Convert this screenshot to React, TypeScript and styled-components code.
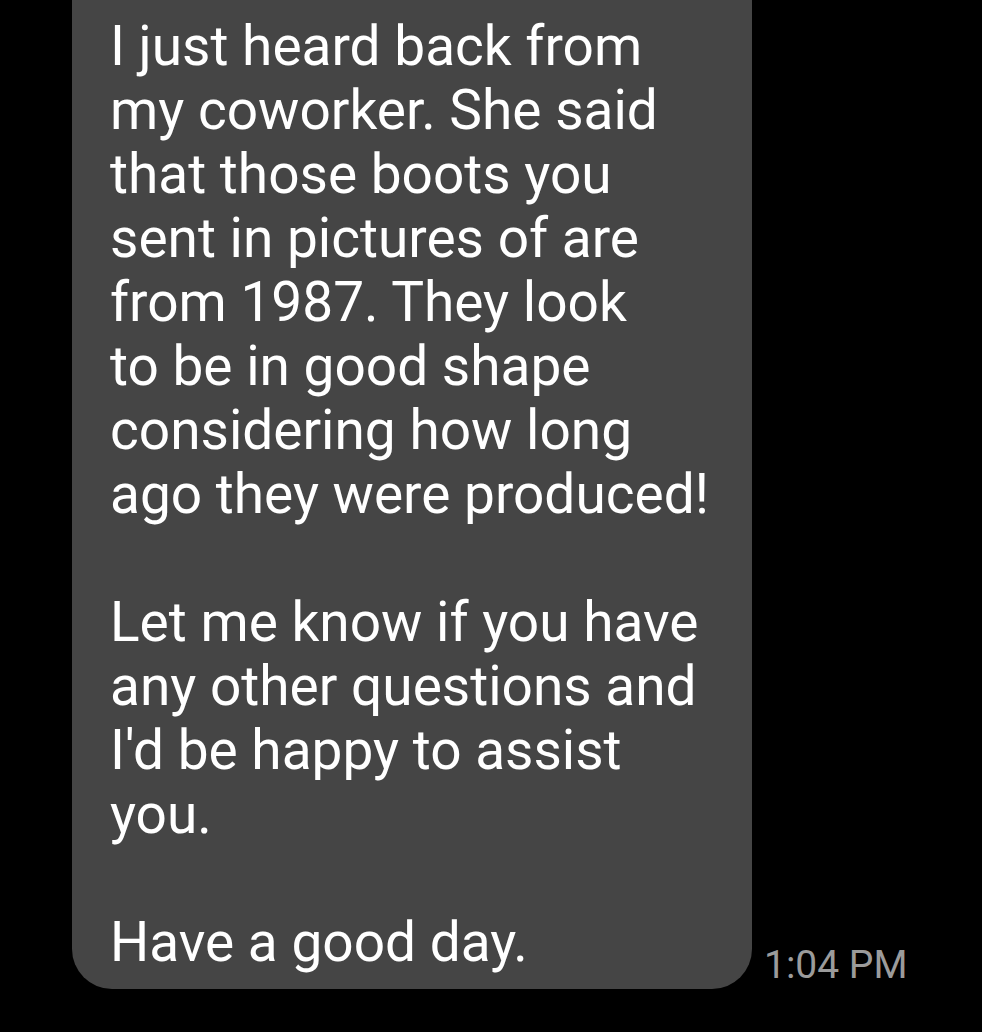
import React from "react";
import styled, { createGlobalStyle } from "styled-components";

const Global = createGlobalStyle`
  html, body { margin: 0; padding: 0; background: #000; }
  body { font-family: Roboto, "Noto Sans", sans-serif; }
`;

const Screen = styled.div`
  width: 982px;
  height: 1032px;
  background: #000;
  overflow: hidden;
`;

const Row = styled.div`
  display: flex;
  align-items: flex-end;
  padding-left: 72px;
  gap: 12px;
`;

const Bubble = styled.div`
  width: 680px;
  box-sizing: border-box;
  background: #454545;
  border-radius: 0 0 40px 40px;
  padding: 14px 20px 15px 38px;
  color: #fff;
  font-size: 55px;
  line-height: 64px;
  white-space: pre-line;
  letter-spacing: 0;
`;

const Time = styled.div`
  color: #9b9b9b;
  font-size: 39px;
  line-height: 46px;
  padding-bottom: 1px;
  white-space: nowrap;
`;

const message = `I just heard back from
my coworker. She said
that those boots you
sent in pictures of are
from 1987. They look
to be in good shape
considering how long
ago they were produced!

Let me know if you have
any other questions and
I'd be happy to assist
you.

Have a good day.`;

export default function App() {
  return (
    <>
      <Global />
      <Screen>
        <Row>
          <Bubble>{message}</Bubble>
          <Time>1:04 PM</Time>
        </Row>
      </Screen>
    </>
  );
}
